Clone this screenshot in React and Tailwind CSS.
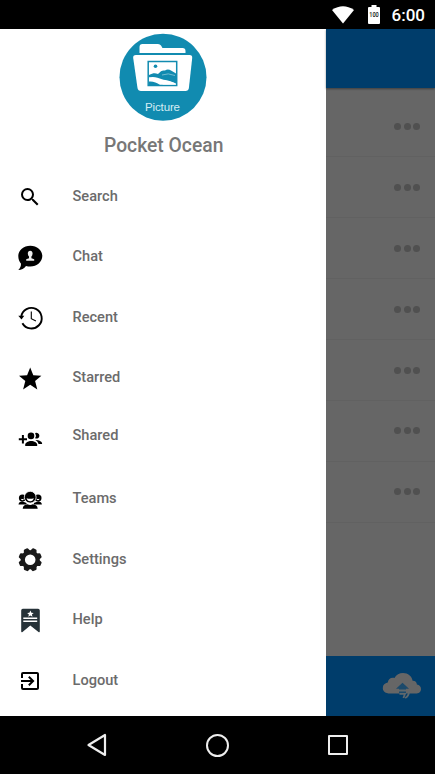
import { MdSearch, MdExitToApp } from "react-icons/md";

function ChatIcon() {
    return (
        <svg width="28" height="28" viewBox="0 0 28 28">
            <path d="M14.3 1.7c6.7 0 12 4.6 12 10.4s-5.300 10.500-12 10.500c-1.600 0-3-.2-4.300-.7-1.900 2.500-4.500 4-7.700 4.100 1.700-1.600 2.700-3.500 2.700-6.300-1.700-1.900-2.700-4.600-2.700-7.600 0-5.800 5.300-10.400 12-10.400z" fill="#000" />
            <path d="M14.200 6.800c1.500 0 2.400 1.100 2.400 2.800 0 1.200-.5 2.200-1.200 2.800v1.900l2.800 1v1.500h-8v-1.500l2.800-1v-1.900c-.7-.6-1.200-1.600-1.200-2.800 0-1.700.9-2.800 2.400-2.800z" fill="#eee" />
        </svg>
    );
}

function RecentIcon() {
    return (
        <svg width="28" height="28" viewBox="0 0 28 28" fill="none" stroke="#000">
            <path d="M5.200 12.800A10.300 10.300 0 1 1 6.400 19.200" strokeWidth="1.900" />
            <path d="M15.300 7.500v7.200l4.600 2.200" strokeWidth="1.100" />
            <path d="M2.300 11.800h6l-2.800 3.600z" fill="#000" stroke="none" />
        </svg>
    );
}

function StarIcon() {
    return (
        <svg width="28" height="28" viewBox="0 0 28 28">
            <path d="M14.200 2.500l3.100 7.700 8.100.6-6.300 5.200 2.200 8.400-7.100-4.700-7.100 4.700L9.300 16 3 10.800l8.100-.6z" fill="#000" />
        </svg>
    );
}

function SharedIcon() {
    return (
        <svg width="28" height="28" viewBox="0 0 28 28" fill="#000">
            <path d="M5.900 10h2v3.200H11v2H7.900v3.300h-2v-3.300H2.800v-2h3.100z" />
            <circle cx="15" cy="10.900" r="3.300" />
            <path d="M19.100 8.100a2.900 2.900 0 1 1 0 5.100 4.900 4.900 0 0 0 0-5.100z" />
            <path d="M9.200 20.900v-1.200c0-2.100 3-3.800 6-3.800s6 1.700 6 3.800v1.200z" />
            <path d="M19.300 14.900c3.500.1 6.800 1.400 6.800 3.500v.7h-3.600c-.2-1.800-1.500-3.200-3.200-4.200z" />
        </svg>
    );
}

function TeamsIcon() {
    return (
        <svg width="28" height="28" viewBox="0 0 28 28" fill="#000">
            <circle cx="6.400" cy="11.900" r="3.500" />
            <circle cx="22" cy="11.900" r="3.500" />
            <path d="M2.500 18.600c.2-2.100 1.500-2.900 3.600-3.300l4.400 1.800v1.500z" />
            <path d="M25.900 18.600c-.2-2.100-1.500-2.900-3.600-3.300l-4.400 1.800v1.500z" />
            <path d="M4.800 12.700q1.700.7 3.200-.2-.2 1.500-1.500 1.700-1.400-.2-1.700-1.500zM20.400 12.500q1.700.9 3.200.2-.3 1.300-1.600 1.500-1.400-.2-1.600-1.700z" fill="#fff" />
            <circle cx="14.200" cy="11.200" r="5.900" stroke="#fff" strokeWidth=".8" />
            <path d="M10.600 12.300q3.600 1.100 7.200 0-.7 3-3.600 3t-3.600-3z" fill="#fff" />
            <path d="M6.700 22.700c.2-3 2.100-3.900 4.800-4.400 1.800 1 3.600 1 5.400 0 2.700.5 4.600 1.400 4.800 4.400z" />
        </svg>
    );
}

function SettingsIcon() {
    const teeth = [22.5, 67.5, 112.5, 157.5, 202.5, 247.5, 292.5, 337.5];
    return (
        <svg width="28" height="28" viewBox="0 0 28 28">
            <circle cx="14.200" cy="13.700" r="7.400" fill="none" stroke="#1a1a1a" strokeWidth="4.200" />
            {teeth.map((angle) => (
                <path
                    key={angle}
                    d="M10.800 5.500l1-2.700q.3-.8 1-.8h2.800q.7 0 1 .8l1 2.700z"
                    fill="#1a1a1a"
                    transform={`rotate(${angle} 14.200 13.700)`}
                />
            ))}
        </svg>
    );
}

function HelpIcon() {
    return (
        <svg width="28" height="28" viewBox="0 0 28 28">
            <path d="M6.800 1.800h15.300q1.700 0 1.700 1.700v20.800q0 1.500-1.300.7L14.300 18.400 6.500 25q-1.300.8-1.300-.7V3.500q0-1.700 1.600-1.700z" fill="#263238" />
            <path d="M14.400 3.500l1 2.200 2.300.2-1.800 1.500.6 2.400-2.100-1.300-2.100 1.300.6-2.400-1.800-1.500 2.300-.2z" fill="#fff" />
            <path d="M7.300 11.200h13.900M7.300 14.300h13.900" stroke="#fff" strokeWidth="1.400" />
        </svg>
    );
}

function CloudIcon() {
    return (
        <svg width="40" height="30" viewBox="0 0 40 30">
            <path d="M8 22.500C3.500 22.500.8 20.300.8 17c0-3.200 2.100-4.900 5-5.500C6.200 8 9 6.200 12.500 7 14.200 3.600 17.400 2 21 2c5.200 0 8.700 3.100 9.600 7.800 2.700-.1 4.200 1.300 4.300 3.800 2.500.5 4.100 2 4.100 4.300 0 3-2.300 4.600-5.500 4.600z" fill="#666" />
            <path d="M20.500 11.800l6.500 6h-3v4.700h-7v-4.700h-3z" fill="#1c4a6b" />
            <path d="M17 19.500h7M17.500 22.800h5.500l-1.600 4.200M27 20c0 3.500-1 5.500-3.800 7" stroke="#60686c" strokeWidth="1.800" fill="none" />
        </svg>
    );
}

function Logo() {
    return (
        <svg width="88" height="88" viewBox="0 0 88 88">
            <circle cx="44" cy="44.200" r="43.500" fill="#118bb0" />
            <path d="M20.500 20V14q0-3 3-3H39q2 0 3 1.500l1.500 2.500h20q3 0 3 3v2z" fill="#fff" />
            <path d="M17 22h53.500q3 0 2.700 3l-3.300 30q-.4 3-3.500 3H22q-3 0-3.500-3l-4.300-30q-.4-3 2.800-3z" fill="#fff" />
            <rect x="29.200" y="28.500" width="28.500" height="24" fill="#fff" stroke="#118bb0" strokeWidth="1.500" />
            <circle cx="36.500" cy="33.200" r="1.800" fill="#118bb0" />
            <path d="M30 42c4-2 6-2 9-1 3-3 4-4 7-3.500 3-2.500 6-.5 11 3v10c-6-3-12-2-19-5q-4-1-8-1z" fill="#118bb0" />
            <path d="M30 44.500c5-1.500 9 .5 13 1.800 4 1.200 9 1 14 5.200H44c-4-3-9-5-14-4z" fill="#fff" />
            <path d="M30 48.500q6-.5 11 3.500H30z" fill="#118bb0" />
            <path d="M43 42q6-2.500 13 .5" fill="none" stroke="#8bc6d8" strokeWidth=".8" />
            <text x="43.500" y="77.500" textAnchor="middle" fontSize="11.500" fill="#d5edf4" fontFamily="Liberation Sans, sans-serif" textLength="35">Picture</text>
        </svg>
    );
}

const menu = [
    { label: "Search", icon: <MdSearch size={24} /> },
    { label: "Chat", icon: <ChatIcon /> },
    { label: "Recent", icon: <RecentIcon /> },
    { label: "Starred", icon: <StarIcon /> },
    { label: "Shared", icon: <SharedIcon />, labelClass: "pb-[5px]" },
    { label: "Teams", icon: <TeamsIcon /> },
    { label: "Settings", icon: <SettingsIcon /> },
    { label: "Help", icon: <HelpIcon /> },
    { label: "Logout", icon: <MdExitToApp size={24} /> }
];

function StatusBar() {
    return (
        <div className="flex h-[29px] shrink-0 items-center justify-end bg-black pr-[10px] text-white">
            <svg width="22" height="18" viewBox="0 0 22 18" className="mr-[14px]">
                <path d="M0 4Q11-3.500 22 4L11 17.500z" fill="#fff" />
            </svg>
            <svg width="12" height="19" viewBox="0 0 12 19" className="mr-[12px]">
                <path d="M3.500 0h5v2H11q1 0 1 1v15q0 1-1 1H1q-1 0-1-1V3q0-1 1-1h2.500z" fill="#fff" />
                <text x="6" y="12" textAnchor="middle" fontSize="6.500" fontWeight="500" fontFamily="Roboto, sans-serif" fill="#111" textLength="9.500" lengthAdjust="spacingAndGlyphs">100</text>
            </svg>
            <span className="pt-px text-[17px] leading-none font-medium">6:00</span>
        </div>
    );
}

function Drawer() {
    return (
        <div className="flex w-[326.4px] shrink-0 flex-col bg-white">
            <div className="flex h-[136.7px] flex-col items-center pt-[4px]">
                <Logo />
                <h1 className="mt-[13px] ml-px text-[19.3px] leading-[24px] font-medium text-[#777]">Pocket Ocean</h1>
            </div>
            <nav>
                {menu.map((item) => (
                    <a key={item.label} className="flex h-[60.5px] items-center pl-4">
                        <span className="flex w-7 justify-center pt-[3px] text-black">{item.icon}</span>
                        <span className={`ml-[28.5px] text-[14.6px] leading-5 font-medium text-[#6b6b6b] ${item.labelClass || ""}`}>
                            {item.label}
                        </span>
                    </a>
                ))}
            </nav>
        </div>
    );
}

// File list behind the drawer, already dimmed
function Backdrop() {
    return (
        <div className="flex flex-1 flex-col bg-[#666]">
            <div className="z-10 h-[59px] shrink-0 bg-[#003d6b] shadow-[0_1px_2px_rgba(0,0,0,0.4)]" />
            <div className="flex-1 pt-[8.6px]">
                {[0, 1, 2, 3, 4, 5, 6].map((row) => (
                    <div key={row} className="flex h-[60.9px] items-center justify-end gap-[2.500px] border-b border-[#616161] pr-[15px]">
                        <span className="size-[7px] rounded-full bg-[#505050]" />
                        <span className="size-[7px] rounded-full bg-[#505050]" />
                        <span className="size-[7px] rounded-full bg-[#505050]" />
                    </div>
                ))}
            </div>
            <div className="flex h-[60px] items-center justify-end bg-[#003d6b] pr-[13px]">
                <CloudIcon />
            </div>
        </div>
    );
}

function NavBar() {
    return (
        <div className="flex h-[58px] shrink-0 items-center bg-black pl-[86px]">
            <svg width="22" height="24" viewBox="0 0 22 24" fill="none" stroke="#eee" strokeWidth="2.200" strokeLinejoin="round">
                <path d="M19 2v20L2.500 12z" />
            </svg>
            <span className="ml-[98px] size-[23px] rounded-full border-[2.500px] border-[#eee]" />
            <span className="ml-[99px] size-[20px] rounded-[1px] border-2 border-[#eee]" />
        </div>
    );
}

function App() {
    return (
        <div className="flex h-screen w-full flex-col overflow-hidden font-[Roboto,sans-serif]">
            <StatusBar />
            <div className="flex min-h-0 flex-1">
                <Drawer />
                <Backdrop />
            </div>
            <NavBar />
        </div>
    );
}

export default App;
